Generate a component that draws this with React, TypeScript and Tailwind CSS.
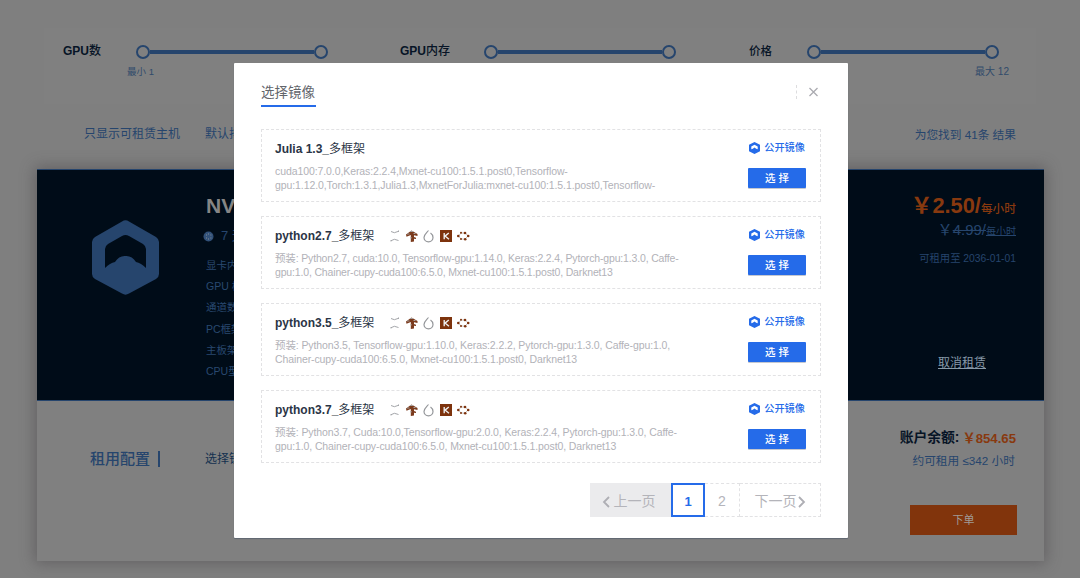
import React from "react";

const images = [
  {
    name: "Julia 1.3_",
    tracking: "tracking-[-0.09px]",
    lines: ["cuda100:7.0.0,Keras:2.2.4,Mxnet-cu100:1.5.1.post0,Tensorflow-", "gpu:1.12.0,Torch:1.3.1,Julia1.3,MxnetForJulia:mxnet-cu100:1.5.1.post0,Tensorflow-"],
    icons: false,
  },
  {
    name: "python2.7_",
    tracking: "tracking-[-0.16px]",
    lines: ["预装: Python2.7, cuda:10.0, Tensorflow-gpu:1.14.0, Keras:2.2.4, Pytorch-gpu:1.3.0, Caffe-", "gpu:1.0, Chainer-cupy-cuda100:6.5.0, Mxnet-cu100:1.5.1.post0, Darknet13"],
    icons: true,
  },
  {
    name: "python3.5_",
    tracking: "tracking-[-0.1px]",
    lines: ["预装: Python3.5, Tensorflow-gpu:1.10.0, Keras:2.2.2, Pytorch-gpu:1.3.0, Caffe-gpu:1.0,", "Chainer-cupy-cuda100:6.5.0, Mxnet-cu100:1.5.1.post0, Darknet13"],
    icons: true,
  },
  {
    name: "python3.7_",
    tracking: "tracking-[-0.11px]",
    lines: ["预装: Python3.7, Cuda:10.0,Tensorflow-gpu:2.0.0, Keras:2.2.4, Pytorch-gpu:1.3.0, Caffe-", "gpu:1.0, Chainer-cupy-cuda100:6.5.0, Mxnet-cu100:1.5.1.post0, Darknet13"],
    icons: true,
  },
];

function Slider() {
  return (
    <div className="flex h-[14px] w-[192px] shrink-0 items-center">
      <span className="size-[14px] shrink-0 rounded-full border-2 border-[#26456d]" />
      <span className="h-[4px] flex-1 bg-[#26456d]" />
      <span className="size-[14px] shrink-0 rounded-full border-2 border-[#26456d]" />
    </div>
  );
}

function HexLogo({ className }: { className: string }) {
  return (
    <svg viewBox="0 0 67 75" className={className} fill="currentColor">
      <path
        fillRule="evenodd"
        d="M30 1.500 Q33.500 -.8 37 1.500 L64 17 Q67 19 67 22 V54 Q67 57 64 59 L37 73.500 Q33.500 75.800 30 73.500 L3 59 Q0 57 0 54 V22 Q0 19 3 17Z M30 16 L16 24 Q13 26 13 29 V48 Q18 43 23 42 Q27 35.500 33.500 36 Q40 35.500 44 42 Q49 43 54 48 V29 Q54 26 51 24 L37 16 Q33.500 14 30 16Z"
      />
    </svg>
  );
}

function PublicBadgeIcon() {
  return (
    <svg width="11" height="12" viewBox="0 0 11 12" className="ml-px">
      <path d="M5.500 0 L11 2.700 V9.200 L5.500 12 L0 9.200 V2.700Z" fill="#256be9" />
      <path d="M2.300 7.300 V4.500 L5.500 2.700 L8.700 4.500 V7.300 L7.200 6.700 L5.500 5.400 L3.800 6.700Z" fill="#fff" />
    </svg>
  );
}

function FrameworkIcons() {
  return (
    <svg width="82" height="14" viewBox="0 0 82 14" fill="none" className="relative -top-px ml-[14px]">
      <path d="M3 2.500 Q6 5 10.500 2.300 M3 11.700 Q6 9 10.500 11.500 M10.500 1.500v1.500 M3 11v1.500" stroke="#a4a6aa" strokeWidth="1" />
      <path d="M18 5.500 L23.500 1.500 L29.500 5 V7 L26 6.300 V8 L28 8.800 V10 L26 9.800 V12.500 L22.800 13 V6 L18.500 7.800Z" fill="#7b3a1c" />
      <path d="M22 2.500h3M19 5h2.500M25.500 4.500h2M23 8v1.500" stroke="#a5a2a1" strokeWidth="1" />
      <path d="M40.500 1.500 C38.500 4 36 5.500 36 8.500 A4.500 4.300 0 0 0 45 8.500 C45 6.500 44 5 42.500 4" stroke="#94969a" strokeWidth="1.200" />
      <rect x="52" y="1" width="12" height="12" fill="#7d330d" />
      <path d="M56.200 4v6.200M60.800 4 L57 7.100 L61 10.200" stroke="#eee" strokeWidth="1.400" />
      <path d="M70.500 7 L73 4 H77.500 L80 7 L77 10 H73Z" stroke="#b3a9a5" strokeWidth=".7" />
      <g fill="#7d330d">
        <circle cx="70.300" cy="7" r="1.300" /><circle cx="73" cy="3.800" r="1" /><circle cx="77" cy="4" r="1.300" />
        <circle cx="80.200" cy="7" r="1.300" /><circle cx="77.200" cy="10.200" r="1.300" /><circle cx="73" cy="10" r="1" />
      </g>
    </svg>
  );
}

function ImageCard({ name, lines, icons, tracking }: (typeof images)[number]) {
  return (
    <li className="flex h-[73px] justify-between border border-dashed border-[#e2e2e4] pr-[14px] pl-[13px]">
      <div className="pt-[11px]">
        <div className="flex h-[17px] items-center text-[12px] leading-[17px] font-bold text-[#2b3546]">
          <span className="whitespace-nowrap">{name}<span className="font-normal">多框架</span></span>
          {icons && <FrameworkIcons />}
        </div>
        <div className={`mt-[7px] text-[10.5px] leading-[13.5px] whitespace-nowrap text-[#b2b2b8] ${tracking}`}>
          {lines.map((l) => <p key={l}>{l}</p>)}
        </div>
      </div>
      <div className="flex w-[58px] shrink-0 flex-col pt-[10px]">
        <div className="flex h-[15px] items-center justify-between pr-px text-[10.200px] leading-[15px] font-medium whitespace-nowrap text-[#256be9]">
          <PublicBadgeIcon />
          公开镜像
        </div>
        <button className="mt-[13px] h-[20px] w-[58px] rounded-[1px] bg-[#256be9] text-center text-[10.500px] leading-[20px] font-medium text-white shadow-[0_1px_0_#c5c8d0]">
          选 择
        </button>
      </div>
    </li>
  );
}

export default function App() {
  return (
    <div className="relative h-[578px] w-[1080px] overflow-hidden bg-[#7f7f7f] font-['Liberation_Sans','Noto_Sans_CJK_SC',sans-serif] text-[#26456d]">
      <div className="mx-[37px] flex h-[169px] flex-col pt-[28px]">
        <section className="mx-[7px] flex h-[76px] bg-[#808080] pt-[15px] text-[12px] leading-[17px] text-[#071426]">
          <div className="flex w-[336px] pl-[19px]">
            <span className="w-[73px] font-bold">GPU<span className="font-medium">数</span></span>
            <div className="pt-[2px]">
              <Slider />
              <p className="-ml-[9px] pt-[5px] text-[9.500px] leading-[16px] text-[#314b6b]">最小 1</p>
            </div>
          </div>
          <div className="flex w-[349px] pl-[20px]">
            <span className="w-[84px] font-bold">GPU<span className="font-medium">内存</span></span>
            <div className="pt-[2px]"><Slider /></div>
          </div>
          <div className="flex pl-[20px]">
            <span className="w-[58px] text-[11.500px] font-medium">价格</span>
            <div className="pt-[2px]">
              <Slider />
              <p className="-mr-[10px] pt-[5px] text-right text-[10px] leading-[16px] text-[#314b6b]">最大 12</p>
            </div>
          </div>
        </section>
        <div className="mt-[21px] flex h-[18px] items-center justify-between pr-[27px] pl-[47px] text-[12px] leading-[18px]">
          <div className="flex gap-[25px]"><span>只显示可租赁主机</span><span>默认排序</span></div>
          <span className="pt-px text-[11.700px]">为您找到 41条 结果</span>
        </div>
      </div>

      <main className="ml-[37px] flex h-[392px] w-[1007px] flex-col bg-[#808080] shadow-[0_0_14px_2px_rgba(65,60,65,0.45)]">
        <section className="flex h-[232px] justify-between border-y border-[#26456d] bg-[#000c18]">
          <div className="flex">
            <HexLogo className="mt-[50px] ml-[55px] h-[75px] w-[67px]" />
            <div className="ml-[47px] w-[160px] pt-[23px]">
              <h1 className="h-[26px] text-[21px] leading-[26px] font-bold text-[#858585]">NVIDIA</h1>
              <p className="mt-[7px] -ml-[3px] flex h-[20px] items-center gap-[7px] text-[13px]">
                <svg width="11" height="11" viewBox="0 0 11 11"><circle cx="5.500" cy="5.500" r="5" fill="#315179" /><path d="M3 4h.8M5.200 3h.8M7.500 4h.8M3 7h.8M5.200 8h.8M7.500 7h.8" stroke="#999" /></svg>
                <span>7 天</span>
              </p>
              <div className="mt-[9px] text-[10.500px] leading-[21.200px] text-[#294970]">
                <p>显卡内存</p><p>GPU 核心</p><p>通道数</p><p>PC框架</p><p>主板架构</p><p>CPU型号</p>
              </div>
            </div>
          </div>
          <div className="flex w-[140px] flex-col items-end pr-[28px] whitespace-nowrap">
            <p className="mt-[22px] h-[28px] text-[21.800px] leading-[28px] font-bold text-[#88390f]">￥2.50/<span className="text-[11.700px] font-medium">每小时</span></p>
            <p className="h-[20px] text-[15px] leading-[20px]">￥<span className="line-through">4.99/<span className="text-[10px]">每小时</span></span></p>
            <p className="mt-[11px] h-[15px] text-[10.300px] leading-[15px]">可租用至 2036-01-01</p>
            <a className="mt-[88px] mr-[30px] text-[12px] leading-[18px] text-[#8799a8] underline">取消租赁</a>
          </div>
        </section>
        <section className="flex flex-1 justify-between">
          <div className="flex items-start pt-[48px] pl-[53px]">
            <h2 className="h-[18px] w-[68px] text-[15px] leading-[19px] font-medium whitespace-nowrap">租用配置</h2>
            <span className="mt-[2px] h-[16px] w-[2px] bg-[#26456d]" />
            <span className="ml-[45px] text-[12px] leading-[21px] text-[#14304f]">选择镜像</span>
          </div>
          <div className="flex flex-col items-end pr-[27px] whitespace-nowrap">
            <p className="mt-[27px] mr-px flex h-[20px] text-[13.800px] leading-[20px] font-bold text-[#071426]">账户余额:<span className="ml-[3px] text-[13.200px] leading-[22px] text-[#88390f]">￥854.65</span></p>
            <p className="mt-[5px] mr-[2px] h-[16px] text-[11.700px] leading-[16px]">约可租用 ≤342 小时</p>
            <button className="mt-[36px] h-[30px] w-[107px] bg-[#81340c] text-[11px] text-[#a09a96]">下单</button>
          </div>
        </section>
      </main>

      <div role="dialog" className="absolute top-[63px] left-[234px] flex h-[475px] w-[614px] flex-col rounded-[1px] bg-white px-[27px] shadow-[0_1px_1px_rgba(20,45,80,0.300)]">
        <header className="mt-[19px] flex h-[26px] items-start justify-between">
          <h2 className="h-[25px] w-[55px] border-b-2 border-[#256be9] text-[13.500px] leading-[21px] whitespace-nowrap text-[#62656b]">选择镜像</h2>
          <button className="mt-[3px] mr-[2px] flex h-[14px] w-[23px] items-center justify-end border-l border-dashed border-[#dddddf]" aria-label="关闭">
            <svg width="11" height="11" viewBox="0 0 11 11"><path d="M1.500 1 L9.500 9 M9.500 1 L1.500 9" stroke="#aaaab0" strokeWidth="1.300" /></svg>
          </button>
        </header>
        <ul className="mt-[21px] flex flex-col gap-[14px]">
          {images.map((item) => <ImageCard key={item.name} {...item} />)}
        </ul>
        <nav className="mt-[20px] ml-auto flex h-[34px] w-[231px] text-[14px] leading-[34px] whitespace-nowrap text-[#b4b4ba]">
          <button className="flex w-[81px] items-center justify-center gap-[3px] bg-[#ebebed] pr-[4px]">
            <svg width="9" height="14" viewBox="0 0 9 14" className="mt-[3px]"><path d="M7 2 L2 7 L7 12" stroke="#aeaeb4" strokeWidth="1.800" fill="none" /></svg><span className="pt-px">上一页</span>
          </button>
          <button className="w-[34px] border-2 border-[#256be9] pt-[2px] text-[13px] leading-[30px] font-bold text-[#256be9]">1</button>
          <button className="w-[35px] border-y border-r border-dashed border-[#e2e2e4] leading-[34px]">2</button>
          <button className="flex w-[81px] items-center justify-center border-y border-r border-dashed border-[#e2e2e4]">
            <span className="pt-px">下一页</span><svg width="9" height="14" viewBox="0 0 9 14" className="mt-[3px]"><path d="M2 2 L7 7 L2 12" stroke="#aeaeb4" strokeWidth="1.800" fill="none" /></svg>
          </button>
        </nav>
      </div>
    </div>
  );
}
